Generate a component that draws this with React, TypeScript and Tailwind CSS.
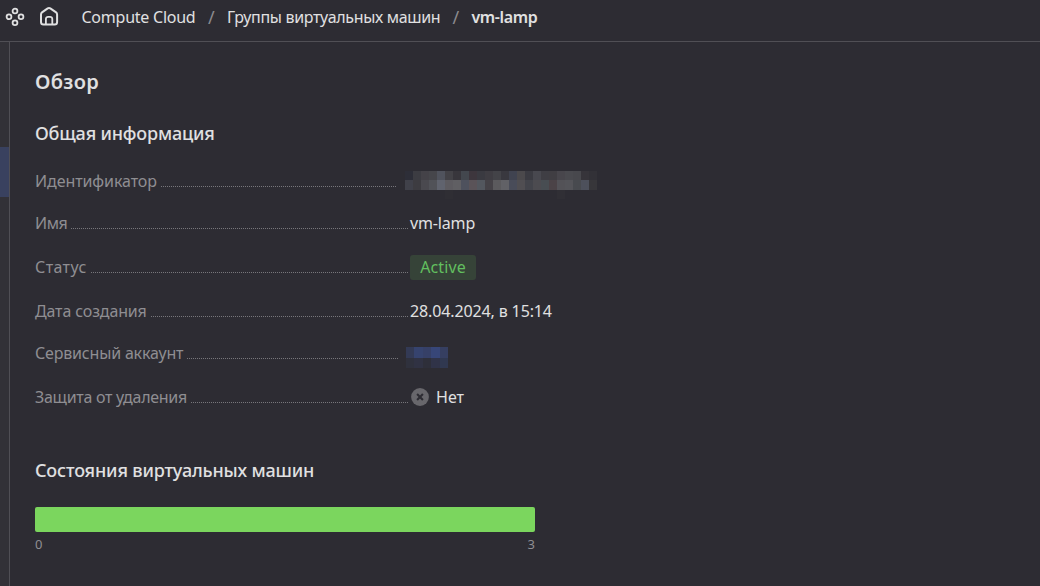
import type { ReactNode } from 'react';

const ID_CELLS = [
  ['bg-[#2d2e38]', 'bg-[#3c3c42]', 'bg-[#444248]', 'bg-[#46464b]', 'bg-[#50535d]', 'bg-[#434247]', 'bg-[#38363c]', 'bg-[#43474e]', 'bg-[#3d363d]', 'bg-[#3a3a41]', 'bg-[#3f3d43]', 'bg-[#434348]', 'bg-[#39383f]', 'bg-[#404350]', 'bg-[#4b494c]', 'bg-[#3b3b42]', 'bg-[#48484f]', 'bg-[#3f3e44]', 'bg-[#403e43]', 'bg-[#48464c]', 'bg-[#4a4a4f]', 'bg-[#48484d]', 'bg-[#36343a]', 'bg-[#323137]'],
  ['bg-[#40414a]', 'bg-[#3d3c41]', 'bg-[#4a494f]', 'bg-[#515258]', 'bg-[#60636e]', 'bg-[#5d5b60]', 'bg-[#605f63]', 'bg-[#4e515d]', 'bg-[#5a5358]', 'bg-[#53575e]', 'bg-[#454247]', 'bg-[#5b5a5d]', 'bg-[#616166]', 'bg-[#494c59]', 'bg-[#504e52]', 'bg-[#43444b]', 'bg-[#4c4b50]', 'bg-[#484d52]', 'bg-[#4b4347]', 'bg-[#535257]', 'bg-[#545459]', 'bg-[#484a4f]', 'bg-[#4d505b]', 'bg-[#37363a]'],
];

const ACCOUNT_CELLS = [
  ['bg-[#333a55]', 'bg-[#36436e]', 'bg-[#364067]', 'bg-[#374678]', 'bg-[#363f61]'],
  ['bg-[#2f313d]', 'bg-[#303243]', 'bg-[#2e2f3a]', 'bg-[#303348]', 'bg-[#303850]'],
];

function MaskedId() {
  return (
    <div className="-ml-[5px] mt-[2px] flex flex-col">
      <div className="flex">{ID_CELLS[0].map((c, i) => <i key={i} className={`h-[9px] w-2 ${c}`} />)}</div>
      <div className="flex">{ID_CELLS[1].map((c, i) => <i key={i} className={`h-[10px] w-2 ${c}`} />)}</div>
      <div className="-mb-[9px] flex justify-between pl-10 pr-8">
        <i className="h-[9px] w-2 bg-[#2f2e34]" />
        <i className="h-[9px] w-2 bg-[#302f35]" />
      </div>
    </div>
  );
}

function MaskedAccount() {
  return (
    <div className="-ml-1 mt-[6px] grid w-[42px] grid-cols-5">
      {ACCOUNT_CELLS[0].map((c, i) => <i key={i} className={`h-[11px] ${c}`} />)}
      {ACCOUNT_CELLS[1].map((c, i) => <i key={i} className={`h-[10px] ${c}`} />)}
    </div>
  );
}

function Row({ label, spacing, height, leader = 'mr-[2px]', children }: { label: string; spacing: string; height: string; leader?: string; children: ReactNode }) {
  return (
    <div className={`flex items-start ${height}`}>
      <div className="flex w-[375px] shrink-0 text-[#8f8e92]">
        <span className={`whitespace-nowrap ${spacing}`}>{label}</span>
        <span className={`ml-1 mt-[17px] h-px flex-1 bg-[repeating-linear-gradient(90deg,#77767b_0_1px,transparent_1px_2px)] ${leader}`} />
      </div>
      {children}
    </div>
  );
}

function Header() {
  return (
    <header className="flex h-[42px] shrink-0 items-start border-b border-[#504f55] pt-[5px]">
      <svg className="ml-[5px] mt-[2px] size-5 shrink-0" viewBox="0 0 20 20" fill="none" stroke="#e0e0e1" strokeWidth="1.8">
        <circle cx="10" cy="4" r="2.4" />
        <circle cx="4" cy="9.8" r="2.4" />
        <circle cx="16" cy="9.8" r="2.4" />
        <circle cx="10" cy="15.8" r="2.4" />
      </svg>
      <svg className="ml-[14px] mt-px size-5 shrink-0" viewBox="0 0 20 20" fill="none" stroke="#e0e0e1" strokeWidth="2" strokeLinejoin="round">
        <path d="M2 8.5c0-1 .3-1.600 1-2.100L8.700 2.400c.900-.6 1.700-.6 2.600 0L17.100 6.400c.7.5 1 1.100 1 2.100V16a2.500 2.500 0 0 1-2.500 2.500H4.500A2.500 2.500 0 0 1 2 16Z" />
        <path d="M6.900 18.300v-5.300a2.200 2.200 0 0 1 2.200-2.200h2a2.200 2.200 0 0 1 2.200 2.200v5.300" strokeWidth="1.8" />
      </svg>
      <nav className="ml-[22.5px] flex whitespace-nowrap">
        <span className="w-[126.5px] tracking-[-0.24px]">Compute Cloud</span>
        <span className="w-[19px] text-[18px] text-[#8b8a8e]">/</span>
        <span className="w-[225.5px] tracking-[-0.33px]">Группы виртуальных машин</span>
        <span className="w-[19px] text-[18px] text-[#8b8a8e]">/</span>
        <span className="font-semibold tracking-[-0.38px]">vm-lamp</span>
      </nav>
    </header>
  );
}

export default function App() {
  return (
    <div className="flex h-screen flex-col overflow-hidden bg-[#2d2c33] font-['Noto_Sans',sans-serif] text-base leading-6 text-[#e0e0e1]">
      <Header />
      <div className="flex flex-1">
        <aside className="w-[10px] shrink-0 border-r border-[#504f55] bg-[#323137] pt-[105px]">
          <div className="h-[50px] bg-[#39415f]" />
        </aside>
        <main className="flex-1 pl-[25px] pt-[24px]">
          <h1 className="h-[55px] text-[20px] leading-8 font-semibold tracking-[0.3px]">Обзор</h1>
          <h2 className="h-[48px] text-[18px] leading-6 font-medium tracking-[-0.18px]">Общая информация</h2>
          <div className="flex flex-col">
            <Row label="Идентификатор" spacing="tracking-[-0.08px]" height="h-[42px]" leader="mr-[14px]">
              <MaskedId />
            </Row>
            <Row label="Имя" spacing="tracking-[-0.4px]" height="h-[44px]">
              <span className="tracking-[-0.15px]">vm-lamp</span>
            </Row>
            <Row label="Статус" spacing="tracking-[0.4px]" height="h-[44px]">
              <span className="h-[25px] w-[66px] rounded-[3px] bg-[#364338] text-center tracking-[0.1px] text-[#62bf5f]">Active</span>
            </Row>
            <Row label="Дата создания" spacing="tracking-[-0.14px]" height="h-[42px]">
              <span className="tracking-[-0.13px]">28.04.2024, в 15:14</span>
            </Row>
            <Row label="Сервисный аккаунт" spacing="tracking-[-0.18px]" height="h-[44px]" leader="mr-[12px]">
              <MaskedAccount />
            </Row>
            <Row label="Защита от удаления" spacing="tracking-[-0.28px]" height="h-[73px]">
              <svg className="ml-px mt-[3px] size-[18px]" viewBox="0 0 18 18">
                <circle cx="9" cy="9" r="8.9" fill="#68676c" />
                <path d="m6.1 6.1 5.8 5.8m0-5.8-5.8 5.8" stroke="#2d2c33" strokeWidth="2.1" />
              </svg>
              <span className="ml-[7px]">Нет</span>
            </Row>
          </div>
          <h2 className="h-[49px] text-[18px] leading-6 font-medium tracking-[-0.17px]">Состояния виртуальных машин</h2>
          <div className="h-[25px] w-[500px] rounded-[2px] bg-[#7bd65e]" />
          <div className="mt-[2px] flex w-[500px] justify-between text-[13px] leading-5 text-[#8f8e92]">
            <span>0</span>
            <span>3</span>
          </div>
        </main>
      </div>
    </div>
  );
}
